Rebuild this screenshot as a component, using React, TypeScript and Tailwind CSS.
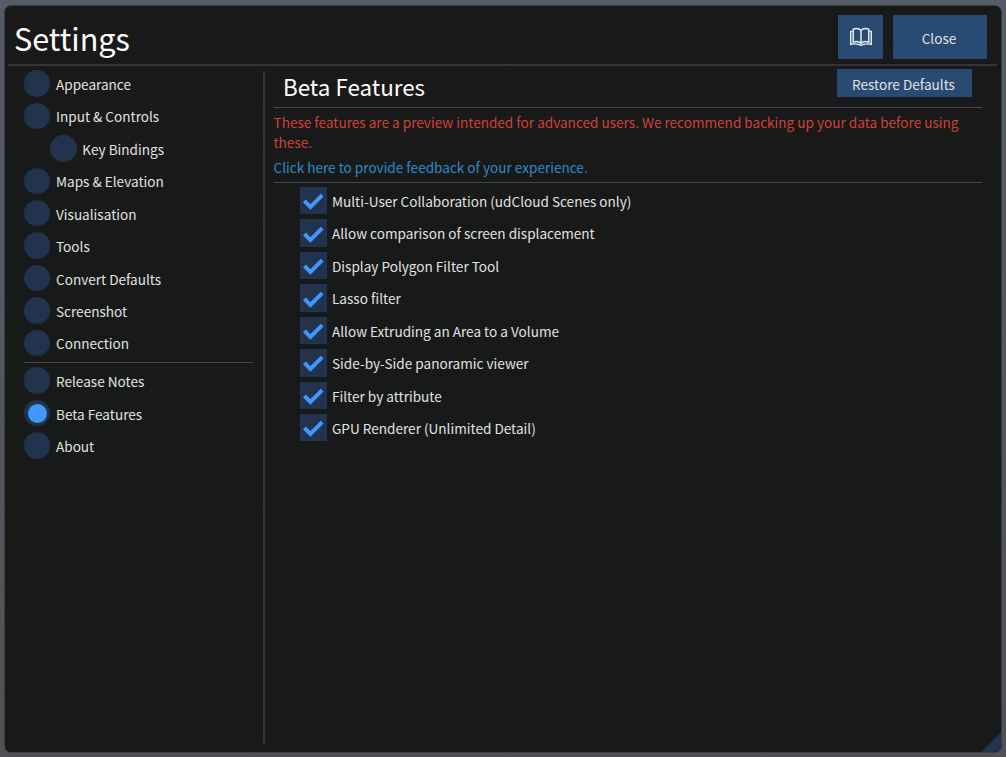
import React from "react";

const mainPages = [
  { label: "Appearance" },
  { label: "Input & Controls" },
  { label: "Key Bindings", nested: true },
  { label: "Maps & Elevation" },
  { label: "Visualisation" },
  { label: "Tools" },
  { label: "Convert Defaults" },
  { label: "Screenshot" },
  { label: "Connection" },
];
const infoPages = [{ label: "Release Notes" }, { label: "Beta Features", active: true }, { label: "About" }];
const features = [
  "Multi-User Collaboration (udCloud Scenes only)",
  "Allow comparison of screen displacement",
  "Display Polygon Filter Tool",
  "Lasso filter",
  "Allow Extruding an Area to a Volume",
  "Side-by-Side panoramic viewer",
  "Filter by attribute",
  "GPU Renderer (Unlimited Detail)",
];

function PageItem({ label, nested, active }: { label: string; nested?: boolean; active?: boolean }) {
  return (
    <button className={`flex h-[32.46px] shrink-0 items-start gap-[5.6px] text-left ${nested ? "pl-[26.3px]" : ""}`}>
      <span className="flex size-[26.4px] items-center justify-center rounded-full bg-[#22334e]">
        {active && <span className="size-[19px] rounded-full bg-[#4297fa]" />}
      </span>
      <span className="pt-[3.6px] leading-5">{label}</span>
    </button>
  );
}

function FeatureItem({ label }: { label: string }) {
  return (
    <label className="flex h-[32.46px] items-start gap-[5px]">
      <span className="flex h-[27.3px] w-[27px] items-center justify-center bg-[#22334e]">
        <svg viewBox="0 0 27 27" className="size-[27px]">
          <path d="M4.4 13.9 10.4 19.9 22.2 8.1" fill="none" stroke="#4297fa" strokeWidth="4" />
        </svg>
      </span>
      <span className="pt-[4px] leading-5">{label}</span>
    </label>
  );
}

function BookIcon() {
  return (
    <svg viewBox="0 0 24 20" className="h-5 w-6" fill="none" stroke="#e6ebf2">
      <path d="M12 3.2C10.2 1.4 7.4 1 4.2 2.2V15.2C7.4 14 10.2 14.6 12 16.4 13.8 14.6 16.6 14 19.8 15.2V2.2C16.6 1 13.8 1.4 12 3.2Z" strokeWidth="1.5" />
      <path d="M12 3.2V16.6" strokeWidth="1.5" />
      <path d="M3.5 4.5H1.7V17.3Q6 16.3 10.3 17.6C11 18.5 13 18.5 13.7 17.6Q18 16.3 22.3 17.3V4.5H20.5" strokeWidth="1.4" />
    </svg>
  );
}

export default function App() {
  return (
    <div className="h-[757px] w-[1006px] bg-linear-to-b from-[#555c65] to-[#505156] pt-[5px] pl-[4px] font-['Noto_Sans_CJK_SC',sans-serif] text-[13.58px] text-[#e2e2e2]">
      <div className="relative flex h-[748px] w-[998px] flex-col overflow-hidden rounded-[7px] border border-[#3c3d45] bg-linear-to-b from-[#191919] to-[#181a19] to-30%">
        <header className="mr-[4px] ml-[3px] flex h-[60px] shrink-0 items-start border-b-2 border-[#34343a] pt-[9px] pr-[10px] pl-[6px]">
          <h1 className="-mt-[1px] flex-1 text-[30.6px] leading-[48px] text-white">Settings</h1>
          <button className="flex h-[44px] w-[45px] items-center justify-center bg-[#294a73]">
            <BookIcon />
          </button>
          <button className="ml-[10px] h-[44px] w-[94px] bg-[#294a73] pt-[2px] pr-[2px]">Close</button>
        </header>
        <div className="flex flex-1 items-start">
          <nav className="mt-[5px] flex h-[672px] w-[260px] flex-col border-r-2 border-[#34343a] pl-[19px]">
            <div className="-mt-[0.8px] flex flex-col">
              {mainPages.map((p) => <PageItem key={p.label} {...p} />)}
            </div>
            <hr className="mr-[10px] mb-[5px] border-[#45454b]" />
            <div className="-mt-[0.8px] flex flex-col">
              {infoPages.map((p) => <PageItem key={p.label} {...p} />)}
            </div>
          </nav>
          <main className="ml-[9px] w-[708px]">
            <div className="flex h-[42px] items-start border-b border-[#45454b] pt-[3px] pr-[10px] pl-[9px]">
              <h2 className="-mt-px flex-1 text-[22.4px] leading-9 text-white">Beta Features</h2>
              <button className="h-[28px] w-[135px] bg-[#294a73] pt-[2px] pr-[2px]">Restore Defaults</button>
            </div>
            <p className="-ml-[0.5px] pt-[4px] leading-5 text-[#d04238]">
              These features are a preview intended for advanced users. We recommend backing up your data before using these.
            </p>
            <a className="mt-[5px] -ml-[0.5px] block h-[25px] leading-5 text-[#2f8acb]">Click here to provide feedback of your experience.</a>
            <div className="border-t border-[#45454b] pt-[4px] pl-[26px]">
              {features.map((f) => <FeatureItem key={f} label={f} />)}
            </div>
          </main>
        </div>
        <svg viewBox="0 0 20 20" className="absolute right-0 bottom-0 size-5"><path d="M20 0V20H0Z" fill="#22344e" /></svg>
      </div>
    </div>
  );
}
